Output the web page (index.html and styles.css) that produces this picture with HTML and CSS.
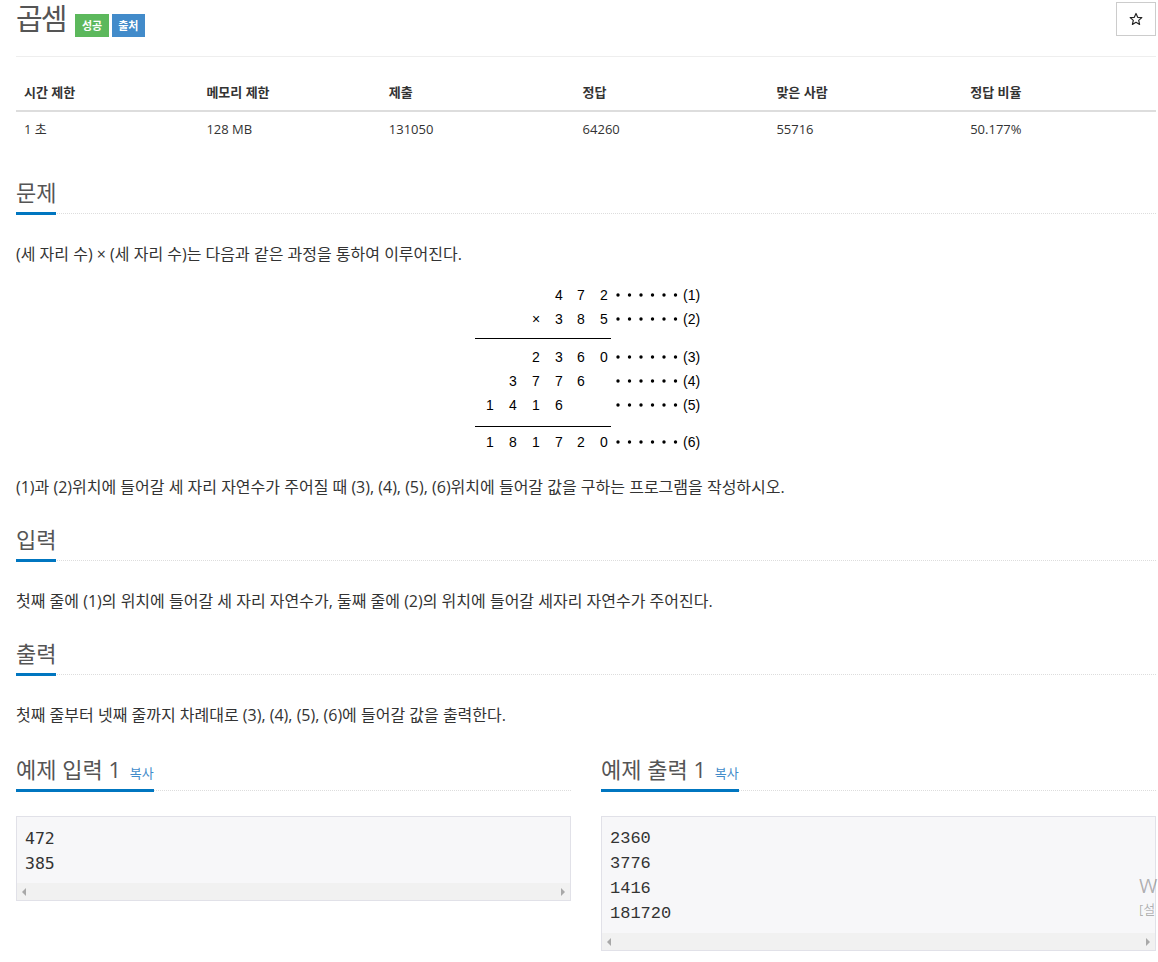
FILE: index.html
```html
<!DOCTYPE html>
<html lang="ko">
<head>
<meta charset="utf-8">
<title>곱셈</title>
<link rel="stylesheet" href="styles.css">
</head>
<body>
<div class="page">
  <div class="page-header">
    <h1 class="title">곱셈</h1>
    <div class="labels">
      <span class="label label-success">성공</span>
      <span class="label label-info">출처</span>
    </div>
    <button class="star-btn" type="button" aria-label="즐겨찾기">
      <svg width="14" height="14" viewBox="0 0 24 24"><path d="M12 2.5l2.9 6.6 7.1.6-5.4 4.7 1.6 7-6.2-3.7-6.2 3.7 1.6-7L2 9.7l7.1-.6z" fill="none" stroke="#222" stroke-width="2" stroke-linejoin="round"/></svg>
    </button>
  </div>

  <table class="info">
    <thead>
      <tr>
        <th class="w16">시간 제한</th>
        <th class="w16">메모리 제한</th>
        <th class="w17">제출</th>
        <th class="w17">정답</th>
        <th class="w17">맞은 사람</th>
        <th class="w17">정답 비율</th>
      </tr>
    </thead>
    <tbody>
      <tr>
        <td>1 초</td>
        <td>128 MB</td>
        <td>131050</td>
        <td>64260</td>
        <td>55716</td>
        <td>50.177%</td>
      </tr>
    </tbody>
  </table>

  <section class="section">
    <h2 class="headline"><span class="headline-text">문제</span></h2>
    <p class="text">(세 자리 수) × (세 자리 수)는 다음과 같은 과정을 통하여 이루어진다.</p>
    <div class="figure">
      <svg width="240" height="173" viewBox="0 0 240 173" class="calc">
        <g class="digits">
          <text x="89" y="19">4</text><text x="111" y="19">7</text><text x="134" y="19">2</text>
          <text x="66" y="43">×</text><text x="89" y="43">3</text><text x="111" y="43">8</text><text x="134" y="43">5</text>
          <text x="66" y="81">2</text><text x="89" y="81">3</text><text x="111" y="81">6</text><text x="134" y="81">0</text>
          <text x="43" y="105">3</text><text x="66" y="105">7</text><text x="89" y="105">7</text><text x="111" y="105">6</text>
          <text x="20" y="129">1</text><text x="43" y="129">4</text><text x="66" y="129">1</text><text x="89" y="129">6</text>
          <text x="20" y="166">1</text><text x="43" y="166">8</text><text x="66" y="166">1</text><text x="89" y="166">7</text><text x="111" y="166">2</text><text x="134" y="166">0</text>
        </g>
        <line x1="5" y1="57.5" x2="141" y2="57.5" stroke="#000" stroke-width="1"/>
        <line x1="5" y1="145.5" x2="141" y2="145.5" stroke="#000" stroke-width="1"/>
        <g fill="#000">
          <g transform="translate(0,14)"><circle cx="148" cy="0" r="1.7"/><circle cx="159.5" cy="0" r="1.7"/><circle cx="171" cy="0" r="1.7"/><circle cx="182.5" cy="0" r="1.7"/><circle cx="194" cy="0" r="1.7"/><circle cx="205.5" cy="0" r="1.7"/></g>
          <g transform="translate(0,38)"><circle cx="148" cy="0" r="1.7"/><circle cx="159.5" cy="0" r="1.7"/><circle cx="171" cy="0" r="1.7"/><circle cx="182.5" cy="0" r="1.7"/><circle cx="194" cy="0" r="1.7"/><circle cx="205.5" cy="0" r="1.7"/></g>
          <g transform="translate(0,76)"><circle cx="148" cy="0" r="1.7"/><circle cx="159.5" cy="0" r="1.7"/><circle cx="171" cy="0" r="1.7"/><circle cx="182.5" cy="0" r="1.7"/><circle cx="194" cy="0" r="1.7"/><circle cx="205.5" cy="0" r="1.7"/></g>
          <g transform="translate(0,100)"><circle cx="148" cy="0" r="1.7"/><circle cx="159.5" cy="0" r="1.7"/><circle cx="171" cy="0" r="1.7"/><circle cx="182.5" cy="0" r="1.7"/><circle cx="194" cy="0" r="1.7"/><circle cx="205.5" cy="0" r="1.7"/></g>
          <g transform="translate(0,124)"><circle cx="148" cy="0" r="1.7"/><circle cx="159.5" cy="0" r="1.7"/><circle cx="171" cy="0" r="1.7"/><circle cx="182.5" cy="0" r="1.7"/><circle cx="194" cy="0" r="1.7"/><circle cx="205.5" cy="0" r="1.7"/></g>
          <g transform="translate(0,161)"><circle cx="148" cy="0" r="1.7"/><circle cx="159.5" cy="0" r="1.7"/><circle cx="171" cy="0" r="1.7"/><circle cx="182.5" cy="0" r="1.7"/><circle cx="194" cy="0" r="1.7"/><circle cx="205.5" cy="0" r="1.7"/></g>
        </g>
        <g class="marks">
          <text x="213" y="19">(1)</text>
          <text x="213" y="43">(2)</text>
          <text x="213" y="81">(3)</text>
          <text x="213" y="105">(4)</text>
          <text x="213" y="129">(5)</text>
          <text x="213" y="166">(6)</text>
        </g>
      </svg>
    </div>
    <p class="text after-figure">(1)과 (2)위치에 들어갈 세 자리 자연수가 주어질 때 (3), (4), (5), (6)위치에 들어갈 값을 구하는 프로그램을 작성하시오.</p>
  </section>

  <section class="section">
    <h2 class="headline"><span class="headline-text">입력</span></h2>
    <p class="text">첫째 줄에 (1)의 위치에 들어갈 세 자리 자연수가, 둘째 줄에 (2)의 위치에 들어갈 세자리 자연수가 주어진다.</p>
  </section>

  <section class="section">
    <h2 class="headline"><span class="headline-text">출력</span></h2>
    <p class="text">첫째 줄부터 넷째 줄까지 차례대로 (3), (4), (5), (6)에 들어갈 값을 출력한다.</p>
  </section>

  <div class="samples">
    <section class="sample">
      <h2 class="headline"><span class="headline-text">예제 입력 1 <a class="copy" href="#">복사</a></span></h2>
      <div class="sampledata">
        <pre class="sample-in">472
385</pre>
        <div class="hscroll"><span class="arrow-left"></span><span class="arrow-right"></span></div>
      </div>
    </section>
    <section class="sample">
      <h2 class="headline"><span class="headline-text">예제 출력 1 <a class="copy" href="#">복사</a></span></h2>
      <div class="sampledata">
        <pre class="sample-out">2360
3776
1416
181720</pre>
        <div class="hscroll"><span class="arrow-left"></span><span class="arrow-right"></span></div>
      </div>
    </section>
  </div>
</div>
<div class="watermark" aria-hidden="true">
  <div class="wm-title">W</div>
  <div class="wm-sub">[설</div>
</div>
</body>
</html>
```
FILE: styles.css
```css
html, body {
  margin: 0;
  padding: 0;
  overflow: hidden;
  background: #fff;
}

body {
  font-family: "Open Sans", "Noto Sans CJK KR", sans-serif;
  color: #333;
  font-size: 14px;
  position: relative;
  height: 962px;
}

.page {
  width: 1140px;
  padding-left: 16px;
}

/* header */
.page-header {
  display: flex;
  align-items: flex-start;
  padding-top: 1px;
  padding-bottom: 19px;
  border-bottom: 1px solid #eee;
}

.title {
  margin: 0;
  font-size: 29px;
  line-height: 36px;
  font-weight: normal;
  color: #555;
  letter-spacing: -2px;
}

.labels {
  display: flex;
  gap: 3px;
  margin: 13px 0 0 10px;
}

.label {
  display: inline-block;
  font-size: 11px;
  font-weight: bold;
  line-height: 23px;
  padding: 0 6.5px;
  color: #fff;
}

.label-success { background: #5cb85c; }
.label-info { background: #428bca; }

.star-btn {
  margin-left: auto;
  margin-top: 1px;
  width: 40px;
  height: 34px;
  box-sizing: border-box;
  border: 1px solid #ccc;
  background: #fff;
  padding: 0;
  display: flex;
  align-items: center;
  justify-content: center;
}

/* info table */
.info {
  width: 100%;
  border-collapse: collapse;
  margin: 18px 0 31px;
  font-size: 13px;
}

.info th,
.info td {
  text-align: left;
  padding: 8px;
  line-height: 18.5px;
  color: #333;
}

.info th {
  font-weight: bold;
  border-bottom: 2px solid #ddd;
}

.w16 { width: 16%; }
.w17 { width: 17%; }

/* sections */
.section + .section {
  margin-top: 27px;
}

.headline {
  display: flex;
  margin: 0 0 30px;
  border-bottom: 1px dotted #ddd;
  font-size: 22px;
  line-height: 30px;
  font-weight: normal;
  color: #555;
}

.headline-text {
  padding-bottom: 5px;
  margin-bottom: -2px;
  border-bottom: 3px solid #0076c0;
}

.text {
  margin: 0;
  font-size: 16px;
  line-height: 20px;
  color: #333;
}

.figure {
  margin-top: 17px;
  height: 173px;
  display: flex;
  justify-content: center;
}

.calc {
  display: block;
  margin-left: 8px;
}

.calc .digits text {
  font-family: "Liberation Sans", sans-serif;
  font-size: 14px;
  text-anchor: middle;
  fill: #000;
}

.calc .marks text {
  font-family: "Liberation Sans", sans-serif;
  font-size: 14px;
  fill: #000;
}

.after-figure {
  margin-top: 23px;
}

/* samples */
.samples {
  display: grid;
  grid-template-columns: 555px 555px;
  column-gap: 30px;
  margin-top: 29px;
}

.sample .headline {
  margin-bottom: 25px;
}

.copy {
  font-size: 13px;
  line-height: 1;
  color: #428bca;
  text-decoration: none;
  margin-left: 3px;
}

.sampledata {
  border: 1px solid #e1e1e8;
  background: #f7f7f9;
}

.sampledata pre {
  margin: 0;
  padding: 9px 8px 7px;
  line-height: 25px;
  color: #333;
}

.sample-in {
  font-family: "DejaVu Sans Mono", monospace;
  font-size: 16.5px;
}

.sample-out {
  font-family: "Liberation Mono", monospace;
  font-size: 17px;
}

.hscroll {
  height: 17px;
  background: #f1f1f1;
  display: flex;
  justify-content: space-between;
  align-items: center;
  padding: 0 5px;
}

.arrow-left {
  width: 0;
  height: 0;
  border-top: 4px solid transparent;
  border-bottom: 4px solid transparent;
  border-right: 4px solid #a8a8a8;
}

.arrow-right {
  width: 0;
  height: 0;
  border-top: 4px solid transparent;
  border-bottom: 4px solid transparent;
  border-left: 4px solid #a8a8a8;
}

/* OS watermark overlay, clipped at the window edge */
.watermark {
  position: absolute;
  left: 1139px;
  top: 872px;
  white-space: nowrap;
  color: rgba(0, 0, 0, 0.3);
  pointer-events: none;
}

.wm-title {
  font-size: 20px;
  line-height: 28px;
}

.wm-sub {
  font-size: 13px;
  line-height: 18px;
}
```
